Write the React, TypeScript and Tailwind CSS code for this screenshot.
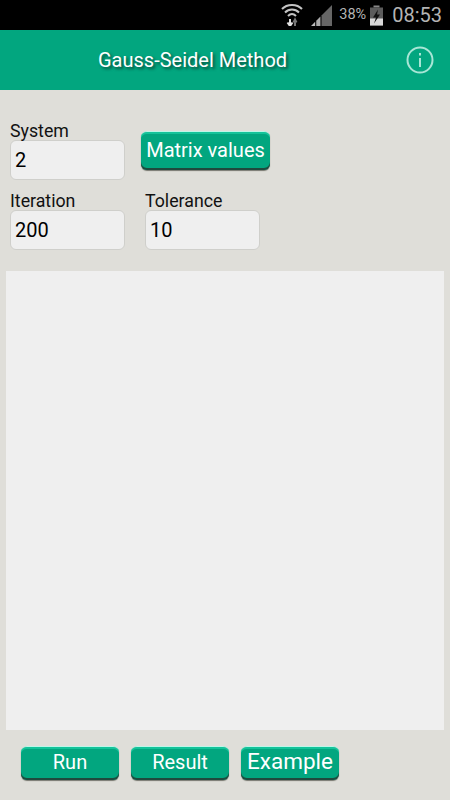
import React from "react";

function Field({ label, value }: { label: string; value: string }) {
  return (
    <div className="w-[115px]">
      <div className="h-[20px] text-[17.75px] leading-[23px] text-[#111]">{label}</div>
      <div className="h-[40px] rounded-[6px] border border-[#cfcfcb] bg-[#efefef] pl-[4px] text-[20px] leading-[38px] text-black">
        {value}
      </div>
    </div>
  );
}

function GreenButton({ label, className }: { label: string; className: string }) {
  return (
    <button
      className={`flex items-center justify-center rounded-[6px] border-t border-t-[#bff5e8] bg-[#02a67f] text-white shadow-[inset_0_2px_0_#14c39a,inset_0_-2px_0_#1f4a3e,0_1px_1px_#77776f] ${className}`}
    >
      {label}
    </button>
  );
}

function StatusBar() {
  return (
    <div className="flex h-[30px] items-center justify-end bg-black pr-[8px] text-[#b4b4b4]">
      {/* wifi */}
      <svg width="22" height="24" viewBox="0 0 22 24" className="mb-[3px] mr-[8px]" fill="none" stroke="#c4c4c4" strokeWidth="2">
        <path d="M1 7 C6 1.500 16 1.500 21 7" />
        <path d="M4 10.500 C8 6.500 14 6.500 18 10.500" />
        <path d="M7 14 C9.500 11.500 12.500 11.500 15 14" />
        <path d="M9 24 V17 M6.500 20.500 L9 24 L11.500 20.500" stroke="#e0e0e0" strokeWidth="2" />
        <path d="M14 24 V18 M12.500 20.500 L14 17.500 L15.500 20.500" stroke="#777" strokeWidth="2" />
      </svg>
      {/* signal */}
      <svg width="21" height="21" viewBox="0 0 20 20" className="mr-[7px]">
        <path d="M0 20 L4 16 V20 Z" fill="#bbb" />
        <path d="M5 20 V15 L9 11 V20 Z" fill="#aaa" />
        <path d="M10 20 V10 L20 0 V20 Z" fill="#666" />
      </svg>
      <span className="mr-[4px] text-[14.5px] leading-[30px]">38%</span>
      {/* battery */}
      <svg width="13" height="21" viewBox="0 0 13 20" className="mr-[9px]">
        <rect x="3.500" y="0" width="6" height="2" fill="#888" />
        <rect x="0" y="2" width="13" height="18" fill="#5c5c5c" />
        <rect x="0" y="13" width="13" height="7" fill="#d8d8d8" />
        <path d="M8 4 L3 12 H6 L4 18 L10 9 H7 Z" fill="#111" />
      </svg>
      <span className="text-[20px] leading-[30px]">08:53</span>
    </div>
  );
}

export default function App() {
  return (
    <div className="flex h-[800px] w-[450px] flex-col bg-[#dfded9] font-['Roboto',sans-serif]">
      <StatusBar />

      {/* barra de título */}
      <div className="flex h-[60px] items-center justify-between bg-[#02a67f] pl-[98px] pr-[16px]">
        <span className="text-[20px] text-white [text-shadow:2px_2px_3px_#0b4d3c]">
          Gauss-Seidel Method
        </span>
        <svg width="28" height="28" viewBox="0 0 28 28" fill="none" stroke="#a8e6d6" strokeWidth="2">
          <circle cx="14" cy="14" r="12.500" />
          <path d="M14 12 V21" />
          <path d="M14 7 V9.400" />
        </svg>
      </div>

      {/* formulario */}
      <div className="flex flex-col gap-[10px] pl-[10px] pt-[30px]">
        <div className="flex gap-[16px]">
          <Field label="System" value="2" />
          <GreenButton label="Matrix values" className="mt-[11px] h-[39px] w-[129px] pb-[2px] text-[20px]" />
        </div>
        <div className="flex gap-[20px]">
          <Field label="Iteration" value="200" />
          <Field label="Tolerance" value="10" />
        </div>
      </div>

      {/* salida */}
      <div className="mx-[6px] mt-[21px] h-[459px] bg-[#efefef]" />

      <div className="flex gap-[12px] pl-[21px] pt-[16px]">
        <GreenButton label="Run" className="h-[34px] w-[98px] pb-[4px] text-[20px]" />
        <GreenButton label="Result" className="h-[34px] w-[98px] pb-[4px] text-[20px]" />
        <GreenButton label="Example" className="h-[34px] w-[98px] pb-[4px] text-[22.5px]" />
      </div>
    </div>
  );
}
